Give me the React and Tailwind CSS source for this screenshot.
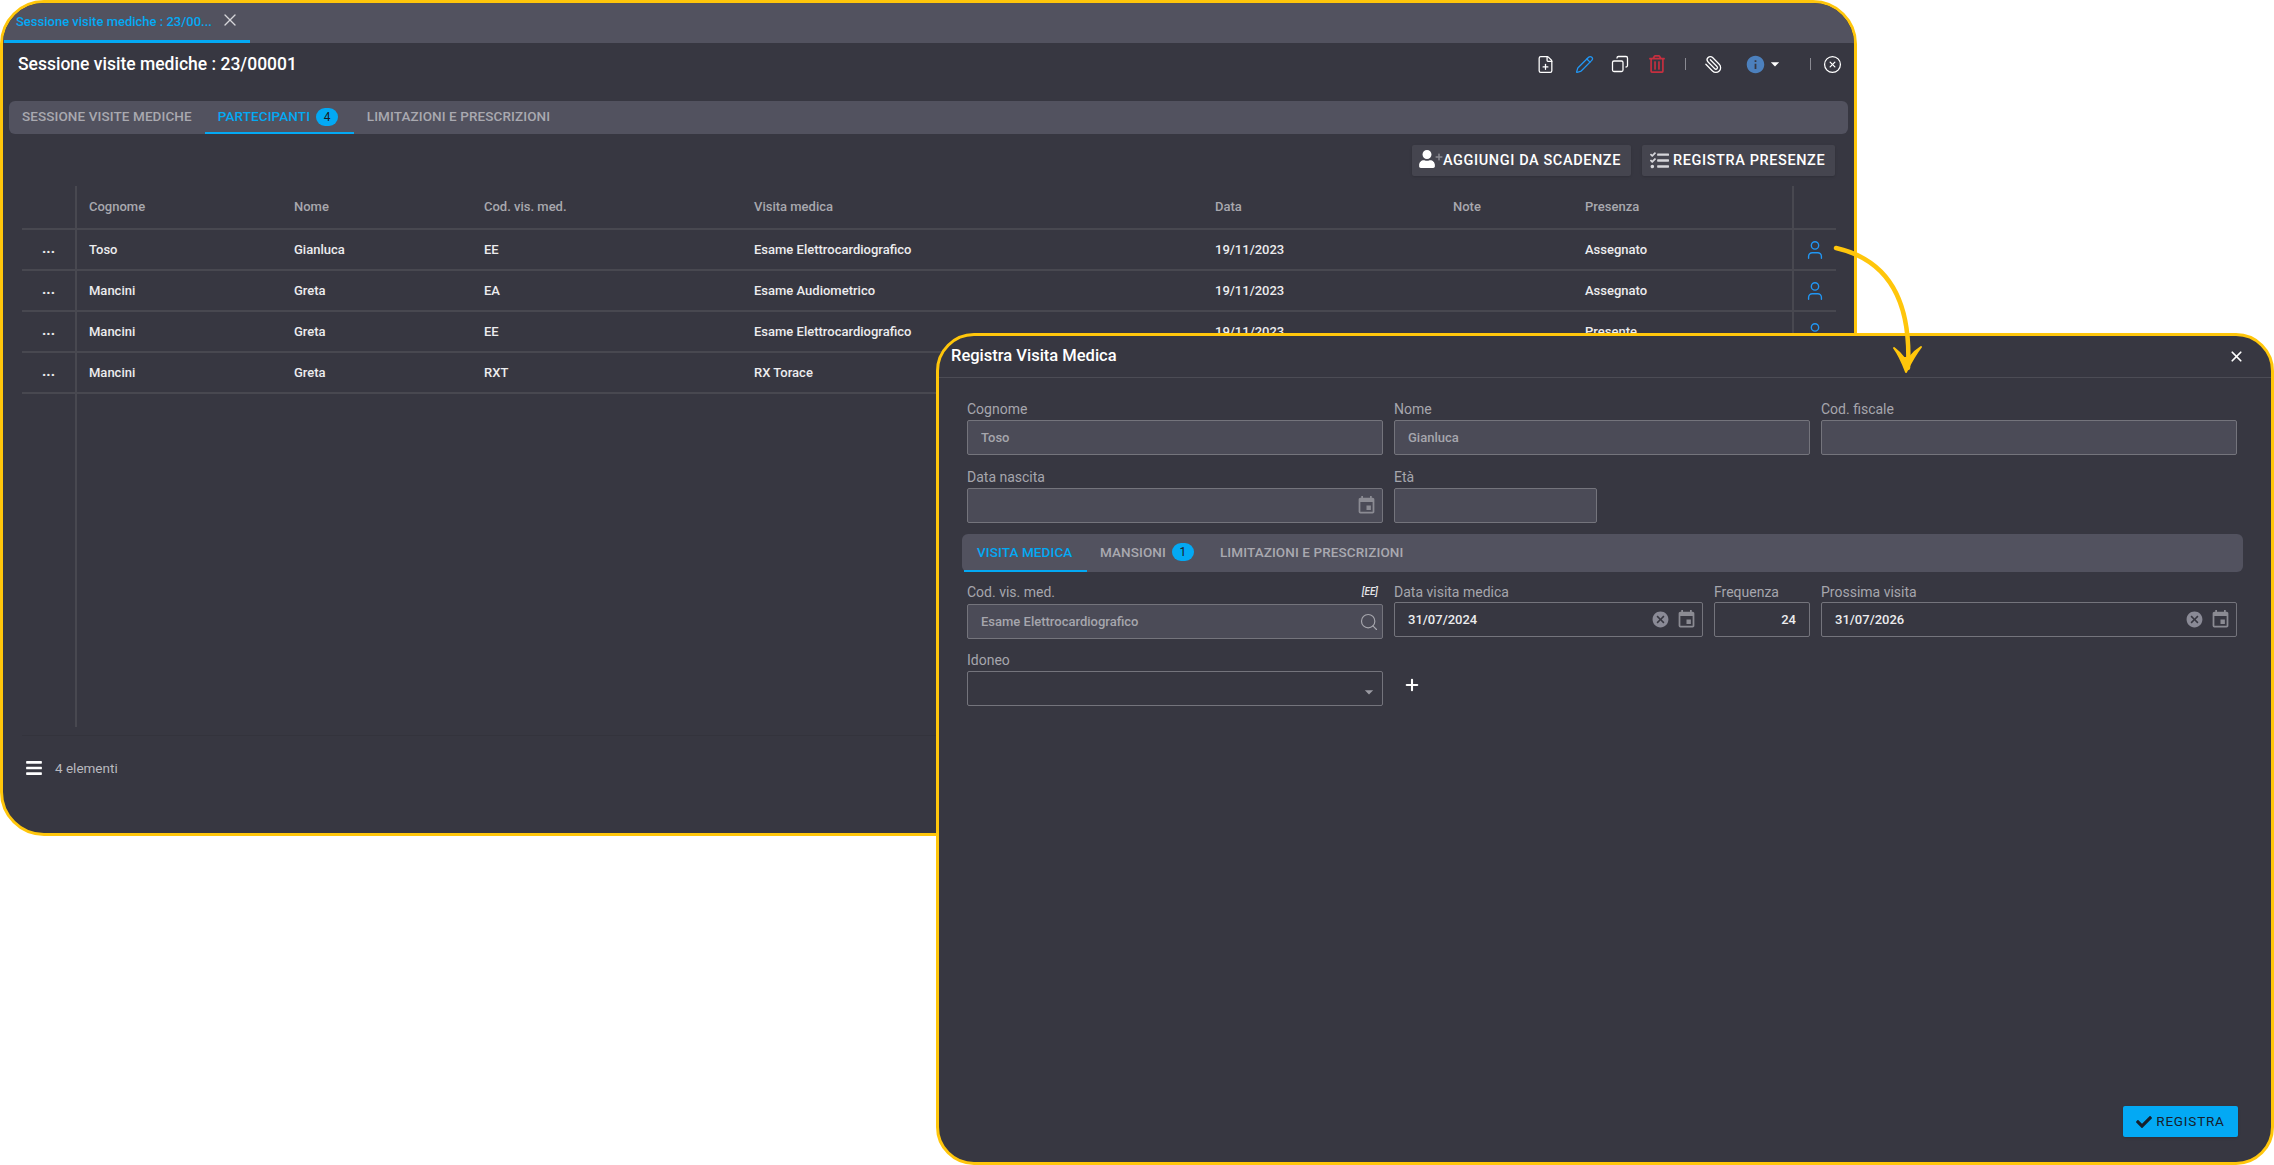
import React from 'react';
import { FilePlus, Pencil, Copy, Paperclip, CircleX, User, Search, X, Plus } from 'lucide-react';
import { FaRegTrashAlt, FaCheck, FaBars, FaUser, FaPlus, FaTasks } from 'react-icons/fa';
import { MdEvent, MdCancel, MdInfo, MdArrowDropDown } from 'react-icons/md';

const columns = [
  { label: 'Cognome', w: 'w-[205px]' },
  { label: 'Nome', w: 'w-[190px]' },
  { label: 'Cod. vis. med.', w: 'w-[270px]' },
  { label: 'Visita medica', w: 'w-[461px]' },
  { label: 'Data', w: 'w-[238px]' },
  { label: 'Note', w: 'w-[132px]' },
  { label: 'Presenza', w: 'w-[207px]' },
];

const rows = [
  ['Toso', 'Gianluca', 'EE', 'Esame Elettrocardiografico', '19/11/2023', '', 'Assegnato'],
  ['Mancini', 'Greta', 'EA', 'Esame Audiometrico', '19/11/2023', '', 'Assegnato'],
  ['Mancini', 'Greta', 'EE', 'Esame Elettrocardiografico', '19/11/2023', '', 'Presente'],
  ['Mancini', 'Greta', 'RXT', 'RX Torace', '19/11/2023', '', 'Presente'],
];

const Badge = ({ children }) => (
  <span className="ml-[6px] flex h-[18px] w-[22px] items-center justify-center rounded-full bg-[#03a9f4] text-[12px] font-normal text-[#1a1a22]">
    {children}
  </span>
);

const Tab = ({ active, children, className }) => (
  <div
    className={
      'flex h-full items-center border-b-2 px-[13px] text-[13.5px] font-medium tracking-[0.1px] ' +
      (active ? 'border-[#03a9f4] text-[#03a9f4] ' : 'border-transparent text-[#a9a9b0] ') +
      (className || '')
    }
  >
    {children}
  </div>
);

const Field = ({ label, value, w, disabled, children, right, h = 'h-[35px]', align, gap = 'mt-[3px]' }) => (
  <div className={w + ' shrink-0'}>
    <div className="flex h-[16px] items-center justify-between text-[14px] leading-none text-[#a6a6ad]">
      <span>{label}</span>
      {right}
    </div>
    <div
      className={
        gap + ' ' + h + ' flex items-center rounded-[2px] border border-[#74747c] px-[13px] text-[13px] font-medium ' +
        (disabled ? 'bg-[#4b4b57] text-[#a6a6ad] ' : 'bg-[#373741] text-[#ececee] ') +
        (align || '')
      }
    >
      <span className="flex-1 truncate">{value}</span>
      {children}
    </div>
  </div>
);

const Cal = () => <MdEvent className="-mr-[8px] text-[#8b8b93]" size={21} />;
const Clear = () => <MdCancel className="mr-[6px] text-[#8a8a96]" size={19} />;

const Session = () => (
  <div className="absolute left-0 top-0 flex h-[836px] w-[1857px] flex-col overflow-hidden rounded-[44px] border-[3px] border-[#ffc60b] bg-[#373741] font-['Roboto',sans-serif]">
    <div className="h-[40px] shrink-0 bg-[#52525f] pl-[1px]">
      <div className="flex h-full w-[246px] items-center border-b-[3px] border-[#03a9f4] pl-[12px]">
        <span className="text-[13px] font-medium text-[#03a9f4]">Sessione visite mediche : 23/00...</span>
        <X className="ml-[8px] -mt-[4px] text-[#d6d6da]" size={20} strokeWidth={1.6} />
      </div>
    </div>

    <div className="flex h-[58px] shrink-0 items-center justify-between pb-[18px] pl-[15px] pr-[12px] pt-[2px]">
      <h1 className="text-[17.5px] font-medium text-white">Sessione visite mediche : 23/00001</h1>
      <div className="flex items-center text-white">
        <FilePlus size={19} strokeWidth={1.6} />
        <Pencil className="ml-[20px] text-[#2196f3]" size={19} strokeWidth={1.6} />
        <Copy className="ml-[17px] -scale-x-100" size={18} strokeWidth={1.7} />
        <FaRegTrashAlt className="ml-[19px] text-[#c62f3f]" size={18} />
        <span className="ml-[19px] h-[12px] w-px bg-[#8a8a92]" />
        <Paperclip className="ml-[18px] -scale-x-100" size={19} strokeWidth={1.6} />
        <MdInfo className="ml-[22px] text-[#4c80bd]" size={21} />
        <MdArrowDropDown className="-ml-[1px] text-white" size={20} />
        <span className="ml-[25px] h-[12px] w-px bg-[#8a8a92]" />
        <CircleX className="ml-[12px]" size={19} strokeWidth={1.6} />
      </div>
    </div>

    <div className="mx-[6px] flex h-[33px] shrink-0 items-center rounded-[6px] bg-[#52525f]">
      <Tab>SESSIONE VISITE MEDICHE</Tab>
      <Tab active className="w-[149px]">
        PARTECIPANTI
        <Badge>4</Badge>
      </Tab>
      <Tab>LIMITAZIONI E PRESCRIZIONI</Tab>
    </div>

    <div className="mr-[19px] mt-[11px] flex shrink-0 justify-end gap-[11px]">
      <button className="flex h-[31px] w-[219px] items-center rounded-[2px] bg-[#45454f] pl-[6px] text-[14.5px] font-medium tracking-[0.6px] text-white shadow-sm">
        <span className="relative mr-[6px] h-[22px] w-[18px] shrink-0">
          <FaUser className="text-white" size={18} />
          <FaPlus className="absolute -right-[7px] top-[3px] text-[#8a8a92]" size={8} />
        </span>
        <span className="ml-[1px]">AGGIUNGI DA SCADENZE</span>
      </button>
      <button className="flex h-[31px] w-[193px] items-center rounded-[2px] bg-[#45454f] pl-[8px] text-[14.5px] font-medium tracking-[0.6px] text-white shadow-sm">
        <FaTasks className="mr-[4px] text-[#d5d5da]" size={19} />
        REGISTRA PRESENZE
      </button>
    </div>

    <div className="ml-[19px] mt-[10px] flex h-[550px] w-[1814px] shrink-0 flex-col border-b border-[#33333c]">
      <div className="flex h-[44px] shrink-0 items-center border-b-2 border-[#484850] text-[13px] font-medium text-[#a8a8ae]">
        <div className="h-full w-[55px] shrink-0 border-r-2 border-[#484850]" />
        <div className="flex pl-[12px]">
          {columns.map((c) => (
            <div key={c.label} className={c.w + ' shrink-0'}>{c.label}</div>
          ))}
        </div>
        <div className="ml-auto h-full w-[44px] border-l-2 border-[#484850]" />
      </div>
      {rows.map((r, i) => (
        <div key={i} className="flex h-[41px] shrink-0 items-center border-b-2 border-[#484850] text-[13px] font-medium text-[#ececee]">
          <div className="flex h-full w-[55px] shrink-0 items-center justify-center border-r-2 border-[#484850] pb-[2px] text-[15px] font-bold leading-none">...</div>
          <div className="flex pl-[12px]">
            {r.map((v, j) => (
              <div key={j} className={columns[j].w + ' shrink-0'}>{v}</div>
            ))}
          </div>
          <div className="ml-auto flex h-full w-[44px] items-center justify-center border-l-2 border-[#484850]">
            {i < 3 && <User className="text-[#2196f3]" size={22} strokeWidth={1.5} />}
          </div>
        </div>
      ))}
      <div className="flex-1 pb-[8px]">
        <div className="h-full w-[55px] border-r-2 border-[#484850]" />
      </div>
    </div>

    <div className="ml-[22px] mt-[22px] flex items-center">
      <FaBars className="text-white" size={18} />
      <span className="ml-[12px] text-[13.5px] text-[#b9b9bf]">4 elementi</span>
    </div>
  </div>
);

const Registra = () => (
  <div className="absolute left-[936px] top-[333px] flex h-[832px] w-[1338px] flex-col overflow-hidden rounded-[38px] border-[3px] border-[#ffc60b] bg-[#373741] font-['Roboto',sans-serif]">
    <div className="flex h-[42px] shrink-0 items-center justify-between border-b border-[#4c4c55] pl-[12px] pr-[26px]">
      <h2 className="text-[16.5px] font-medium text-white">Registra Visita Medica</h2>
      <X className="text-white" size={17} strokeWidth={2.4} />
    </div>

    <div className="flex-1 pl-[28px] pt-[23px]">
      <div className="flex gap-[11px]">
        <Field label="Cognome" value="Toso" w="w-[416px]" disabled />
        <Field label="Nome" value="Gianluca" w="w-[416px]" disabled />
        <Field label="Cod. fiscale" value="" w="w-[416px]" disabled />
      </div>
      <div className="mt-[14px] flex gap-[11px]">
        <Field label="Data nascita" value="" w="w-[416px]" disabled>
          <Cal />
        </Field>
        <Field label="Età" value="" w="w-[203px]" disabled />
      </div>

      <div className="-ml-[5px] mt-[11px] flex h-[38px] w-[1281px] items-center rounded-[6px] bg-[#52525f] pl-[2px]">
        <Tab active className="w-[123px]">VISITA MEDICA</Tab>
        <Tab>
          MANSIONI
          <Badge>1</Badge>
        </Tab>
        <Tab>LIMITAZIONI E PRESCRIZIONI</Tab>
      </div>

      <div className="mt-[12px] flex gap-[11px]">
        <Field
          label="Cod. vis. med."
          value="Esame Elettrocardiografico"
          w="w-[416px]"
          disabled
          gap="mt-[4px]"
          right={<span className="mr-[5px] text-[10px] font-medium italic text-[#e5e5e8]">[EE]</span>}
        >
          <Search className="-mr-[10px] text-[#a6a6ad]" size={20} strokeWidth={1.4} />
        </Field>
        <Field label="Data visita medica" value="31/07/2024" w="w-[309px]" gap="mt-[2px]">
          <Clear />
          <Cal />
        </Field>
        <Field label="Frequenza" value="24" w="w-[96px]" gap="mt-[2px]" align="text-right" />
        <Field label="Prossima visita" value="31/07/2026" w="w-[416px]" gap="mt-[2px]">
          <Clear />
          <Cal />
        </Field>
      </div>

      <div className="mt-[13px] flex items-start gap-[11px]">
        <Field label="Idoneo" value="" w="w-[416px]">
          <MdArrowDropDown className="-mr-[10px] mt-[6px] text-[#9a9aa2]" size={20} />
        </Field>
        <Plus className="ml-[9px] mt-[24px] text-white" size={18} strokeWidth={2.8} />
      </div>
    </div>

    <div className="flex shrink-0 justify-end pb-[25px] pr-[33px]">
      <button className="flex h-[31px] w-[115px] items-center justify-center rounded-[2px] bg-[#03a9f4] text-[13.5px] tracking-[0.8px] text-[#17202c] shadow">
        <FaCheck className="mr-[4px]" size={16} />
        REGISTRA
      </button>
    </div>
  </div>
);

export default function App() {
  return (
    <div className="relative h-[1165px] w-[2274px] overflow-hidden bg-white">
      <Session />
      <Registra />
      {/* freccia gialla dal pulsante utente alla finestra */}
      <svg className="absolute left-[1830px] top-[240px] h-[140px] w-[100px]" viewBox="0 0 100 140" fill="none">
        <path d="M6 8 C 50 18, 82 50, 78 128" stroke="#ffc60b" strokeWidth="4.5" strokeLinecap="round" />
        <path d="M64 108 C 70 116, 73 124, 76 132 C 80 124, 84 116, 91 107 C 86 110, 82 114, 79 118 L 74 118 C 71 114, 68 111, 64 108 Z" fill="#ffc60b" stroke="#ffc60b" strokeWidth="2" strokeLinejoin="round" />
      </svg>
    </div>
  );
}
